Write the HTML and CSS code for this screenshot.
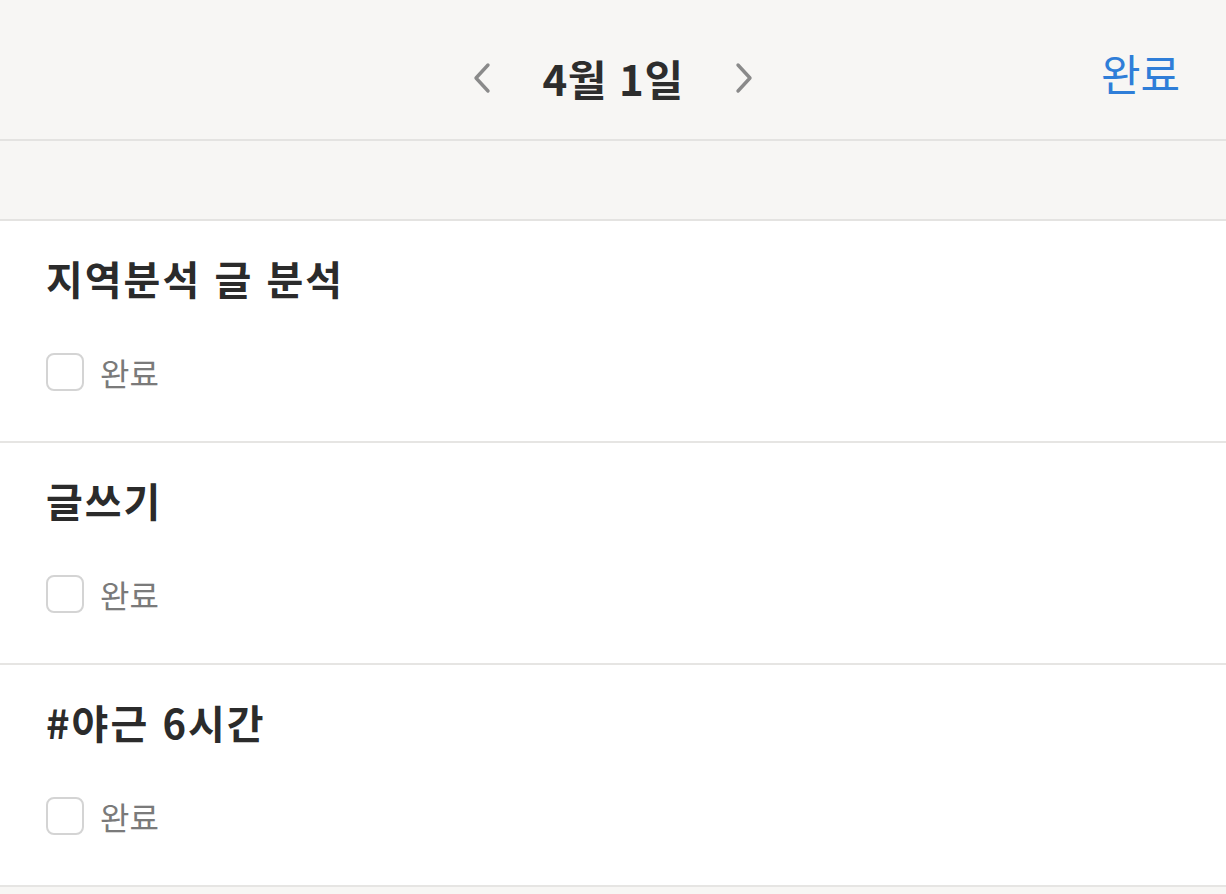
FILE: index.html
```html
<!DOCTYPE html>
<html lang="ko">
<head>
<meta charset="utf-8">
<link rel="stylesheet" href="styles.css">
</head>
<body>
<header class="topbar">
  <div class="nav">
    <svg class="chev" width="20" height="32" viewBox="0 0 20 32"><path d="M16 3 L4 16 L16 29" fill="none" stroke="#8a8a8a" stroke-width="3.4" stroke-linecap="round" stroke-linejoin="round"/></svg>
    <h1 class="date">4월 1일</h1>
    <svg class="chev" width="20" height="32" viewBox="0 0 20 32"><path d="M4 3 L16 16 L4 29" fill="none" stroke="#8a8a8a" stroke-width="3.4" stroke-linecap="round" stroke-linejoin="round"/></svg>
  </div>
  <button class="done">완료</button>
</header>
<div class="band"></div>
<main class="list">
  <section class="item">
    <h2 class="title">지역분석 글 분석</h2>
    <label class="check"><span class="box"></span><span class="lbl">완료</span></label>
  </section>
  <section class="item">
    <h2 class="title">글쓰기</h2>
    <label class="check"><span class="box"></span><span class="lbl">완료</span></label>
  </section>
  <section class="item">
    <h2 class="title">#야근 6시간</h2>
    <label class="check"><span class="box"></span><span class="lbl">완료</span></label>
  </section>
</main>
</body>
</html>
```
FILE: styles.css
```css
html, body {
  margin: 0;
  padding: 0;
}
body {
  background: #f7f6f4;
  font-family: "Noto Sans CJK KR", "Noto Sans", sans-serif;
  color: #2b2b2b;
  width: 1226px;
  height: 894px;
  overflow: hidden;
}
.topbar {
  height: 139px;
  box-sizing: content-box;
  border-bottom: 2px solid #e4e3e1;
  background: #f7f6f4;
  display: flex;
  align-items: center;
  justify-content: center;
  position: relative;
}
.nav {
  display: flex;
  align-items: center;
  gap: 50px;
  margin-top: 16px;
}
.date {
  margin: 0;
  font-size: 42px;
  line-height: 56px;
  font-weight: 700;
  color: #2d2d2d;
  letter-spacing: 0.5px;
}
.done {
  position: absolute;
  right: 46px;
  top: 44px;
  border: 0;
  background: none;
  padding: 0;
  font-family: inherit;
  font-size: 43px;
  line-height: 56px;
  color: #2f7ed8;
}
.band {
  height: 78px;
  border-bottom: 2px solid #e4e3e1;
}
.item {
  background: #fff;
  height: 220px;
  border-bottom: 2px solid #e6e5e3;
  box-sizing: content-box;
  padding: 0 46px;
  display: flex;
  flex-direction: column;
}
.title {
  margin: 29px 0 0;
  font-size: 40px;
  font-weight: 700;
  line-height: 56px;
  letter-spacing: 2px;
  color: #2b2b2b;
}
.check {
  display: flex;
  align-items: center;
  gap: 16px;
  margin-top: 47px;
  height: 38px;
}
.box {
  width: 34px;
  height: 34px;
  border: 2px solid #d4d4d4;
  border-radius: 8px;
  background: #fff;
}
.lbl {
  font-size: 32px;
  line-height: 38px;
  color: #7a7a7a;
}
```
